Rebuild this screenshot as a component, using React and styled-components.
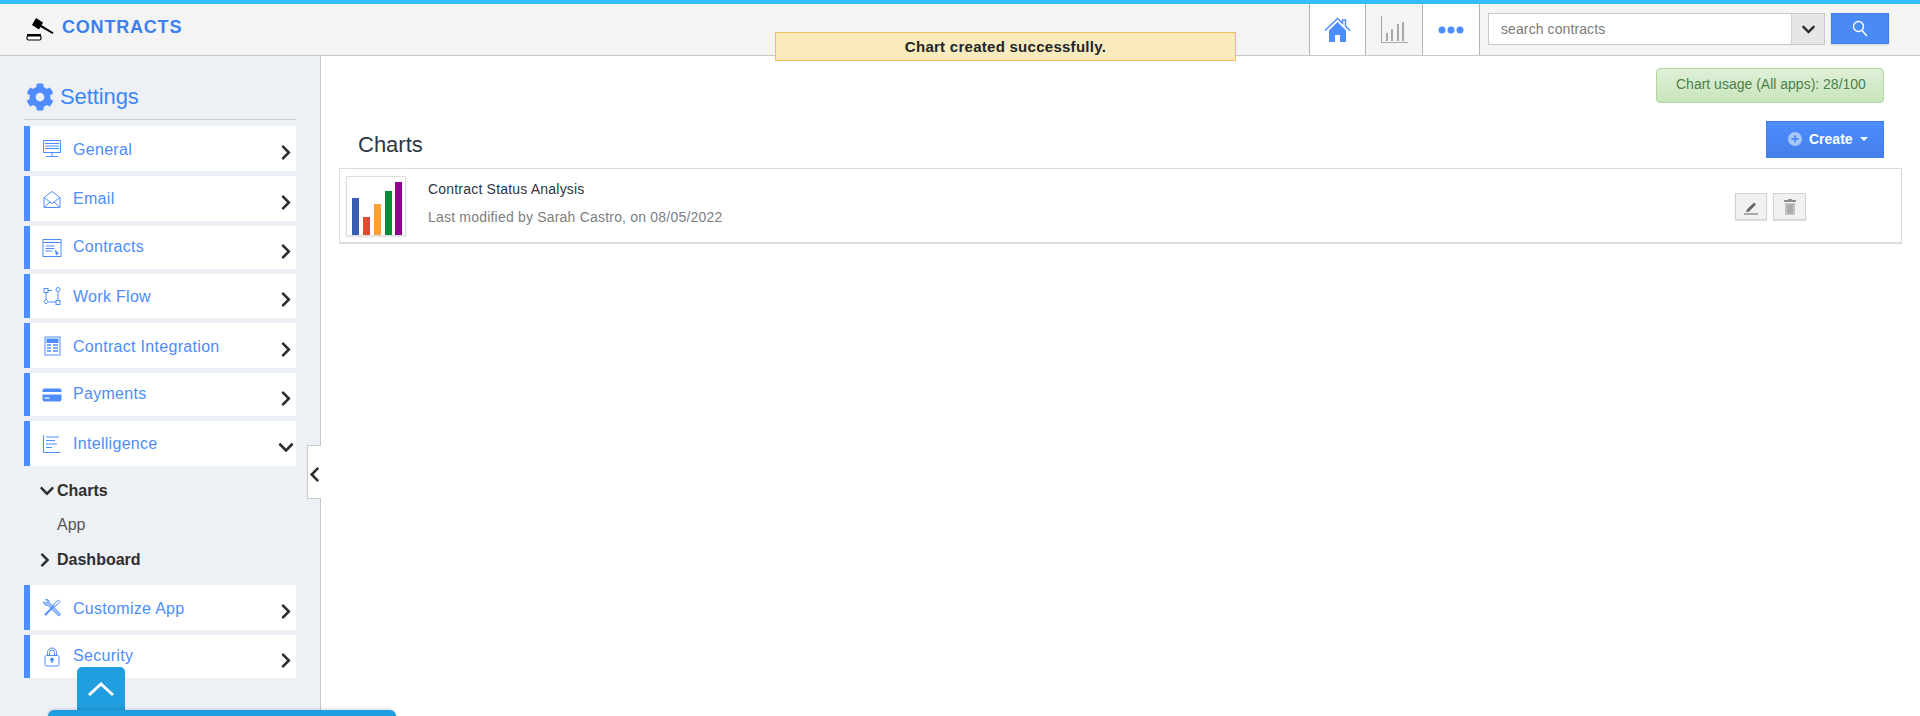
import React from 'react';
import styled, { createGlobalStyle } from 'styled-components';
import { FaCog, FaChevronRight, FaChevronDown, FaChevronLeft } from 'react-icons/fa';

const GlobalStyle = createGlobalStyle`
  html, body { margin: 0; padding: 0; height: 716px; overflow: hidden; background: #fff; }
  body { font-family: "Liberation Sans", Arial, sans-serif; color: #333; }
  * { box-sizing: border-box; }
`;

const Page = styled.div`
  position: relative;
  width: 1920px;
  height: 716px;
  display: flex;
  flex-direction: column;
  overflow: hidden;
`;

const TopBar = styled.header`
  height: 56px;
  flex: none;
  display: flex;
  align-items: stretch;
  background: #f4f4f4;
  border-top: 4px solid #33bdfb;
  border-bottom: 1px solid #c9c9c9;
`;

const Brand = styled.div`
  display: flex;
  align-items: flex-start;
  padding: 13px 0 0 26px;
  gap: 6px;
  flex: 1;
`;

const BrandName = styled.span`
  margin-top: -1px;
  font-size: 18px;
  font-weight: 700;
  letter-spacing: 0.8px;
  line-height: 22px;
  color: #3b80f0;
`;

const NavTab = styled.div`
  width: ${(p) => p.$w}px;
  flex: none;
  display: flex;
  align-items: center;
  justify-content: center;
  background: ${(p) => (p.$muted ? '#f4f4f4' : '#fff')};
  border-left: 1px solid #b5b5b5;
`;

const SearchArea = styled.div`
  display: flex;
  align-items: flex-start;
  width: 441px;
  flex: none;
  padding: 9px 0 0 8px;
  border-left: 1px solid #b5b5b5;
`;

const SearchField = styled.div`
  width: 337px;
  height: 32px;
  display: flex;
  background: #fff;
  border: 1px solid #c9c9c9;
`;

const SearchText = styled.span`
  flex: 1;
  padding-left: 12px;
  font-size: 14px;
  letter-spacing: 0.1px;
  line-height: 30px;
  color: #7b7b7b;
`;

const SearchCaret = styled.span`
  width: 33px;
  display: flex;
  align-items: center;
  justify-content: center;
  background: #e6e6e6;
  border-left: 1px solid #d2d2d2;
  color: #2e2e2e;
  font-size: 15px;
`;

const SearchButton = styled.button`
  width: 58px;
  height: 31px;
  margin-left: 6px;
  padding: 0;
  display: flex;
  align-items: center;
  justify-content: center;
  background: #4a8af4;
  border: 1px solid #3f7fea;
  box-shadow: 0 1px 2px rgba(0, 0, 0, 0.15);
`;

const Body = styled.div`
  flex: 1;
  display: flex;
  min-height: 0;
`;

const Sidebar = styled.aside`
  width: 321px;
  flex: none;
  padding: 0 24px;
  background: #edf0f5;
  border-right: 1px solid #c9c9c9;
`;

const SideTitle = styled.div`
  height: 64px;
  margin-bottom: 6px;
  padding: 26px 0 0 2px;
  display: flex;
  align-items: flex-start;
  gap: 6px;
  border-bottom: 1px solid #ccd0d4;
  font-size: 22px;
  letter-spacing: -0.1px;
  line-height: 30px;
  color: #3f86f5;
  svg { margin-top: 1px; }
`;

const MenuList = styled.div`
  display: flex;
  flex-direction: column;
  gap: 5px;
  width: 272px;
`;

const MenuRow = styled.div`
  height: ${(p) => p.$h}px;
  display: flex;
  align-items: center;
  background: #fff;
  border-left: 6px solid #4d8dff;
`;

const MenuIcon = styled.span`
  width: 20px;
  margin-left: 12px;
  display: flex;
  justify-content: center;
`;

const MenuLabel = styled.span`
  flex: 1;
  margin-left: 11px;
  margin-top: ${(p) => p.$dy || 0}px;
  font-size: 16px;
  letter-spacing: 0.3px;
  color: #4d8dfa;
`;

const MenuArrow = styled.span`
  width: 16px;
  margin: 7px 2px 0 0;
  display: flex;
  justify-content: center;
  color: #2e2e2e;
  font-size: 17px;
`;

const SubNav = styled.div`
  display: flex;
  flex-direction: column;
  height: 119px;
  padding-top: 7.5px;
`;

const SubItem = styled.div`
  height: 34.5px;
  display: flex;
  align-items: center;
  padding-left: 33px;
  font-size: 16px;
  font-weight: ${(p) => (p.$bold ? 700 : 400)};
  color: ${(p) => (p.$bold ? '#2f2f2f' : '#555')};
`;

const SubCaret = styled.span`
  width: 18px;
  margin-left: ${(p) => (p.$closed ? -20 : -19)}px;
  margin-right: ${(p) => (p.$closed ? 2 : 1)}px;
  display: flex;
  justify-content: ${(p) => (p.$closed ? 'flex-start' : 'center')};
  font-size: 16px;
  color: #2e2e2e;
`;

const Main = styled.main`
  flex: 1;
  padding: 12px 18px 0 18px;
  min-width: 0;
`;

const UsageRow = styled.div`
  display: flex;
  justify-content: flex-end;
`;

const UsagePill = styled.div`
  width: 228px;
  height: 35px;
  margin-right: 18px;
  padding-left: 19px;
  border: 1px solid #b2d8a0;
  border-radius: 4px;
  background: linear-gradient(#dff0d8, #c8e5bc);
  font-size: 14px;
  line-height: 31px;
  color: #4f7f4a;
`;

const TitleRow = styled.div`
  display: flex;
  justify-content: space-between;
  align-items: flex-start;
  height: 65px;
  padding: 18px 18px 0 19px;
`;

const Heading = styled.h2`
  margin: 10px 0 0;
  font-size: 22px;
  font-weight: 400;
  line-height: 28px;
  color: #2f3542;
`;

const CreateButton = styled.button`
  width: 118px;
  height: 37px;
  padding: 0 0 1px 21px;
  display: flex;
  align-items: center;
  gap: 7px;
  border: 1px solid #3f7fea;
  background: linear-gradient(#4d8dff, #4580ea);
  color: #fff;
  font: 700 14px "Liberation Sans", Arial, sans-serif;
`;

const CreateCaret = styled.span`
  width: 0;
  height: 0;
  border-top: 4px solid #fff;
  border-left: 4px solid transparent;
  border-right: 4px solid transparent;
`;

const ChartCard = styled.div`
  width: 1563px;
  height: 76px;
  display: flex;
  align-items: flex-start;
  padding: 7px 0 0 6px;
  border: 1px solid #dcdcdc;
  border-bottom-width: 2px;
`;

const Thumb = styled.div`
  width: 60px;
  height: 60px;
  flex: none;
  border: 1px solid #dedede;
  box-shadow: 0 1px 2px rgba(0, 0, 0, 0.12);
`;

const ChartInfo = styled.div`
  flex: 1;
  padding: 4px 0 0 22px;
`;

const ChartName = styled.div`
  font-size: 14px;
  letter-spacing: 0.2px;
  line-height: 18px;
  color: #2f3542;
`;

const ChartMeta = styled.div`
  margin-top: 10px;
  font-size: 14px;
  letter-spacing: 0.2px;
  line-height: 18px;
  color: #7e7e7e;
`;

const ChartActions = styled.div`
  display: flex;
  gap: 6px;
  margin: 17px 95px 0 0;
`;

const ActionButton = styled.span`
  width: ${(p) => p.$w}px;
  height: 27px;
  display: flex;
  align-items: center;
  justify-content: center;
  background: #f1f1f1;
  border: 1px solid #d2d2d2;
  box-shadow: 0 1px 1px rgba(0, 0, 0, 0.12);
`;

const Toast = styled.div`
  position: absolute;
  top: 32px;
  left: 775px;
  width: 461px;
  height: 29px;
  border: 1px solid #eebf5f;
  background: #f9ebbb;
  font-size: 15px;
  font-weight: 700;
  letter-spacing: 0.27px;
  line-height: 27px;
  text-align: center;
  color: #22252b;
`;

const CollapseHandle = styled.div`
  position: absolute;
  top: 445px;
  left: 307px;
  width: 14px;
  height: 54px;
  padding-top: 5px;
  display: flex;
  align-items: center;
  justify-content: flex-end;
  background: #fff;
  border: 1px solid #c9c9c9;
  border-right: none;
  color: #2e2e2e;
  font-size: 17px;
`;

const ScrollTab = styled.div`
  position: absolute;
  top: 667px;
  left: 77px;
  width: 48px;
  height: 44px;
  display: flex;
  align-items: center;
  justify-content: center;
  background: #219ee0;
  border-radius: 5px 5px 0 0;
`;

const BottomBar = styled.div`
  position: absolute;
  top: 710px;
  left: 48px;
  width: 348px;
  height: 10px;
  background: #219ee0;
  border-radius: 6px 6px 0 0;
  box-shadow: 0 -1px 3px rgba(0, 0, 0, 0.15);
`;

const Line = ({ children, size = 20, color = '#4d8dff' }) => (
  <svg width={size} height={size} viewBox="0 0 20 20" fill="none" stroke={color} strokeWidth="1">
    {children}
  </svg>
);

const icons = {
  general: (
    <Line>
      <rect x="1.5" y="1.5" width="17" height="12" />
      <path d="M3 4.5h14M3 7h14M3 9.5h14M10 14v3M4 17.5h12" />
    </Line>
  ),
  email: (
    <Line>
      <path d="M2 8.5 10 2.5l8 6v10H2zM2 8.5l8 6 8-6M2 18.5l6-5.5M18 18.5l-6-5.5" />
    </Line>
  ),
  contracts: (
    <Line>
      <rect x="1" y="1.5" width="18" height="17" />
      <path d="M1 4.5h18M3.5 8h9M3.5 10.5h9M3.5 13h7" />
      <path d="M13.5 12.5l3 3-1.500.3-.6 1.400z" fill="#4d8dff" />
    </Line>
  ),
  workflow: (
    <Line>
      <rect x="2" y="2.500" width="4" height="4" />
      <circle cx="16" cy="3.500" r="2" />
      <path d="M6 4.500h4M16 6v8M4 7v6" />
      <path d="M4 13l2.200 2.500L4 18l-2.200-2.500z" />
      <rect x="14" y="14.500" width="4" height="4" />
      <path d="M6.500 16h7.500" />
    </Line>
  ),
  integration: (
    <Line>
      <rect x="3" y="1" width="15" height="18" />
      <rect x="5" y="3" width="11" height="3.500" fill="#4d8dff" />
      <path d="M5 9h4M11 9h5M5 12h4M11 12h5M5 15h4M11 15h5" strokeWidth="1.400" />
    </Line>
  ),
  payments: (
    <svg width="20" height="20" viewBox="0 0 20 20">
      <path d="M2.500 3.500h15a2 2 0 0 1 2 2v1.500H.5V5.500a2 2 0 0 1 2-2z" fill="#4d8dff" />
      <path d="M.5 9.500h19V14.500a2 2 0 0 1-2 2h-15a2 2 0 0 1-2-2z" fill="#4d8dff" />
      <rect x="2.500" y="12.500" width="5" height="1.200" fill="#fff" />
    </svg>
  ),
  intelligence: (
    <Line>
      <path d="M1.500 1v17.500h17M4 3h13M4 6.500h9M4 10h11M4 13.500h6" />
    </Line>
  ),
  customize: (
    <svg width="20" height="20" viewBox="0 0 20 20" fill="none" stroke="#4d8dff">
      <path d="M1.500 3.500l2.500 2 1.500-1.500-2-2.500c2-.7 4.200.8 4 3.200L18 15.500c1 1.200-.8 3-2 2L6 7.500C3.500 7.800 1 6 1.500 3.500z" fill="#4d8dff" fillOpacity=".55" strokeWidth=".8" />
      <path d="M3 17l8.500-8.500" strokeWidth="2" />
      <path d="M11 8.500l1-2.500 4.500-4 1.500 1.500-4 4.500z" fill="#fff" strokeWidth="1" />
    </svg>
  ),
  security: (
    <Line>
      <path d="M5.500 8.500V5.500a4.500 4.500 0 0 1 9 0v3M7.500 8.500V5.500a2.500 2.500 0 0 1 5 0v3" />
      <rect x="3" y="8.500" width="14" height="10.500" rx="1.500" />
      <circle cx="10" cy="12.500" r="1.500" fill="#4d8dff" />
      <path d="M10 13v3" strokeWidth="1.500" />
    </Line>
  ),
};

const upperMenu = [
  { key: 'general', label: 'General', h: 45, dy: 2 },
  { key: 'email', label: 'Email', h: 45 },
  { key: 'contracts', label: 'Contracts', h: 43, dy: -2 },
  { key: 'workflow', label: 'Work Flow', h: 44, dy: 2 },
  { key: 'integration', label: 'Contract Integration', h: 45, dy: 2 },
  { key: 'payments', label: 'Payments', h: 43, dy: -2 },
  { key: 'intelligence', label: 'Intelligence', h: 45, open: true },
];

const lowerMenu = [
  { key: 'customize', label: 'Customize App', h: 45, dy: 2 },
  { key: 'security', label: 'Security', h: 43, dy: -2 },
];

const Menu = ({ items }) => (
  <MenuList>
    {items.map((item) => (
      <MenuRow key={item.key} $h={item.h}>
        <MenuIcon>{icons[item.key]}</MenuIcon>
        <MenuLabel $dy={item.dy}>{item.label}</MenuLabel>
        <MenuArrow>{item.open ? <FaChevronDown /> : <FaChevronRight />}</MenuArrow>
      </MenuRow>
    ))}
  </MenuList>
);

const GavelIcon = () => (
  <svg width="30" height="24" viewBox="0 0 30 24">
    <path d="M10 1l7 4.500-1.500 2.500 12 7.500-1 1.500-12-7-1.500 2.500-7-4.500z" fill="#000" />
    <rect x="1" y="17" width="14" height="2.200" fill="#000" />
    <rect x="1" y="19" width="14" height="4" rx="1.500" fill="#fff" stroke="#000" strokeWidth="1.200" />
  </svg>
);

const HomeIcon = () => (
  <svg width="27" height="26" viewBox="0 0 27 26">
    <path d="M5 13.500L13.500 5 22 13.500V25h-6v-7h-5v7H5z" fill="#4d8dff" />
    <path d="M1 13.500L13.500 1.500l5 4.800V3h3v6.200l4.500 4.300" fill="none" stroke="#4d8dff" strokeWidth="1.500" />
  </svg>
);

const BarsIcon = () => (
  <svg width="27" height="27" viewBox="0 0 27 27" fill="#a9a9a9">
    <path d="M0 0h1v26h27v1H0z" />
    <rect x="5" y="17" width="2" height="8" />
    <rect x="10" y="13" width="2" height="12" />
    <rect x="16" y="8" width="2" height="17" />
    <rect x="21" y="6" width="2" height="19" />
  </svg>
);

const DotsIcon = () => (
  <svg width="26" height="8" viewBox="0 0 26 8" fill="#4d8dff">
    <circle cx="4" cy="4" r="3.500" />
    <circle cx="13" cy="4" r="3.500" />
    <circle cx="22" cy="4" r="3.500" />
  </svg>
);

const SearchGlass = () => (
  <svg width="16" height="17" viewBox="0 0 16 17" fill="none" stroke="#fff" strokeWidth="1.400">
    <circle cx="6.500" cy="6.500" r="5" />
    <path d="M10 10.500l5 5.500" />
  </svg>
);

const PlusCircle = () => (
  <svg width="14" height="14" viewBox="0 0 14 14">
    <circle cx="7" cy="7" r="7" fill="#a9c6f7" />
    <path d="M7 3.500v7M3.500 7h7" stroke="#4d8dff" strokeWidth="2" />
  </svg>
);

const PencilIcon = () => (
  <svg width="16" height="16" viewBox="0 0 16 16">
    <path d="M4 10.500l7-7 2 2-7 7-3 .8z" fill="#666" />
    <rect x="1" y="14.500" width="14" height="1" fill="#666" />
  </svg>
);

const TrashIcon = () => (
  <svg width="14" height="16" viewBox="0 0 14 16">
    <path d="M5 0h4v1h4v2H1V1h4z" fill="#8d8d8d" />
    <path d="M2 4h10v12H2z" fill="#c2c2c2" />
    <path d="M5 5.500v9M7 5.500v9M9 5.500v9" stroke="#929292" />
  </svg>
);

const ChartThumb = () => (
  <svg width="58" height="58" viewBox="0 0 58 58">
    <rect x="5" y="21" width="7" height="37" fill="#3b5db6" />
    <rect x="16" y="40" width="7" height="18" fill="#e2492e" />
    <rect x="27" y="27" width="7" height="31" fill="#ffa033" />
    <rect x="38" y="14" width="7" height="44" fill="#018d35" />
    <rect x="48" y="5" width="7" height="53" fill="#8f008f" />
  </svg>
);

const App = () => (
  <Page>
    <GlobalStyle />
    <TopBar>
      <Brand>
        <GavelIcon />
        <BrandName>CONTRACTS</BrandName>
      </Brand>
      <NavTab $w={56}><HomeIcon /></NavTab>
      <NavTab $w={57} $muted><BarsIcon /></NavTab>
      <NavTab $w={57}><DotsIcon /></NavTab>
      <SearchArea>
        <SearchField>
          <SearchText>search contracts</SearchText>
          <SearchCaret><FaChevronDown /></SearchCaret>
        </SearchField>
        <SearchButton><SearchGlass /></SearchButton>
      </SearchArea>
    </TopBar>
    <Body>
      <Sidebar>
        <SideTitle>
          <FaCog size={28} color="#4d8dff" />
          Settings
        </SideTitle>
        <Menu items={upperMenu} />
        <SubNav>
          <SubItem $bold><SubCaret><FaChevronDown /></SubCaret>Charts</SubItem>
          <SubItem>App</SubItem>
          <SubItem $bold><SubCaret $closed><FaChevronRight /></SubCaret>Dashboard</SubItem>
        </SubNav>
        <Menu items={lowerMenu} />
      </Sidebar>
      <Main>
        <UsageRow>
          <UsagePill>Chart usage (All apps): 28/100</UsagePill>
        </UsageRow>
        <TitleRow>
          <Heading>Charts</Heading>
          <CreateButton>
            <PlusCircle />
            Create
            <CreateCaret />
          </CreateButton>
        </TitleRow>
        <ChartCard>
          <Thumb><ChartThumb /></Thumb>
          <ChartInfo>
            <ChartName>Contract Status Analysis</ChartName>
            <ChartMeta>Last modified by Sarah Castro, on 08/05/2022</ChartMeta>
          </ChartInfo>
          <ChartActions>
            <ActionButton $w={32}><PencilIcon /></ActionButton>
            <ActionButton $w={33}><TrashIcon /></ActionButton>
          </ChartActions>
        </ChartCard>
      </Main>
    </Body>
    <Toast>Chart created successfully.</Toast>
    <CollapseHandle><FaChevronLeft /></CollapseHandle>
    <ScrollTab>
      <svg width="28" height="16" viewBox="0 0 28 16" fill="none" stroke="#fff" strokeWidth="3">
        <path d="M2 14L14 3l12 11" />
      </svg>
    </ScrollTab>
    <BottomBar />
  </Page>
);

export default App;
